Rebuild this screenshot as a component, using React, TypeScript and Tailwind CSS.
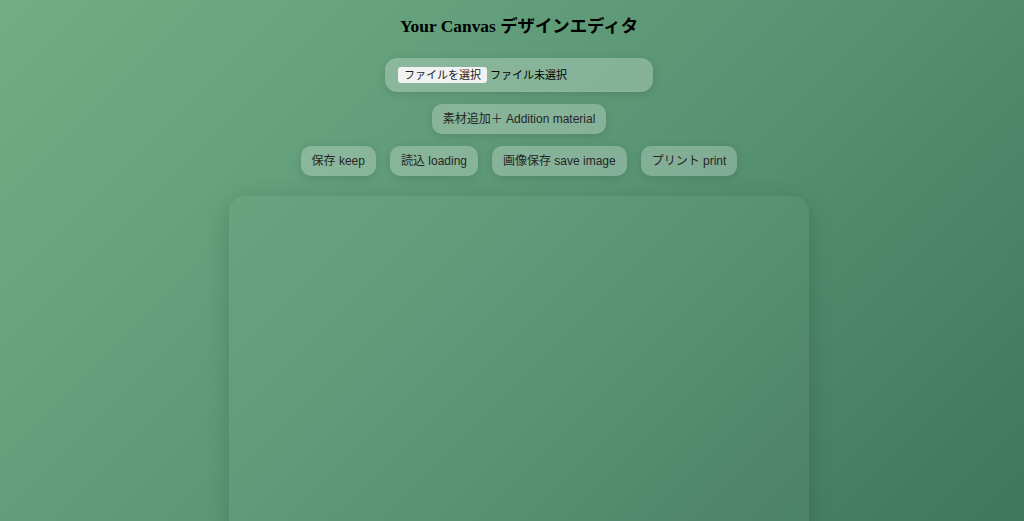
const btn =
  "h-[30px] px-[11px] rounded-[10px] bg-white/25 text-[12px] text-[#262626] shadow-[0_2px_8px_rgba(0,0,0,0.12)] whitespace-nowrap";

export default function App() {
  return (
    <div className="h-screen overflow-hidden bg-[linear-gradient(135deg,#72ae82_0%,#5a9675_50%,#3f765e_100%)] pl-[14px] font-['Liberation_Sans','Noto_Sans_CJK_JP',sans-serif]">
      <div className="flex flex-col items-center">
        <h1 className="pt-[12px] text-[17.4px] leading-[28px] font-bold text-black font-['Liberation_Serif','Noto_Sans_CJK_JP',serif]">
          Your Canvas デザインエディタ
        </h1>

        <label className="mt-[18px] flex h-[34px] w-[268px] items-center rounded-xl bg-white/25 px-[13px] text-[11px] text-black shadow-[0_2px_8px_rgba(0,0,0,0.12)]">
          <span className="rounded-[3px] bg-[#f2f2f2] px-[6px] leading-[16px] text-[#222]">ファイルを選択</span>
          <span className="ml-[3px]">ファイル未選択</span>
          <input type="file" className="hidden" />
        </label>

        <button className={`${btn} mt-[12px] h-[29px] px-[10px]`}>素材追加＋ Addition material</button>

        <div className="mt-[12px] flex gap-[14px]">
          <button className={btn}>保存 keep</button>
          <button className={btn}>読込 loading</button>
          <button className={btn}>画像保存 save image</button>
          <button className={btn}>プリント print</button>
        </div>

        <div className="mt-[20px] h-[420px] w-[580px] rounded-2xl bg-white/[0.03] shadow-[0_6px_24px_rgba(0,0,0,0.16)]" />
      </div>
    </div>
  );
}
